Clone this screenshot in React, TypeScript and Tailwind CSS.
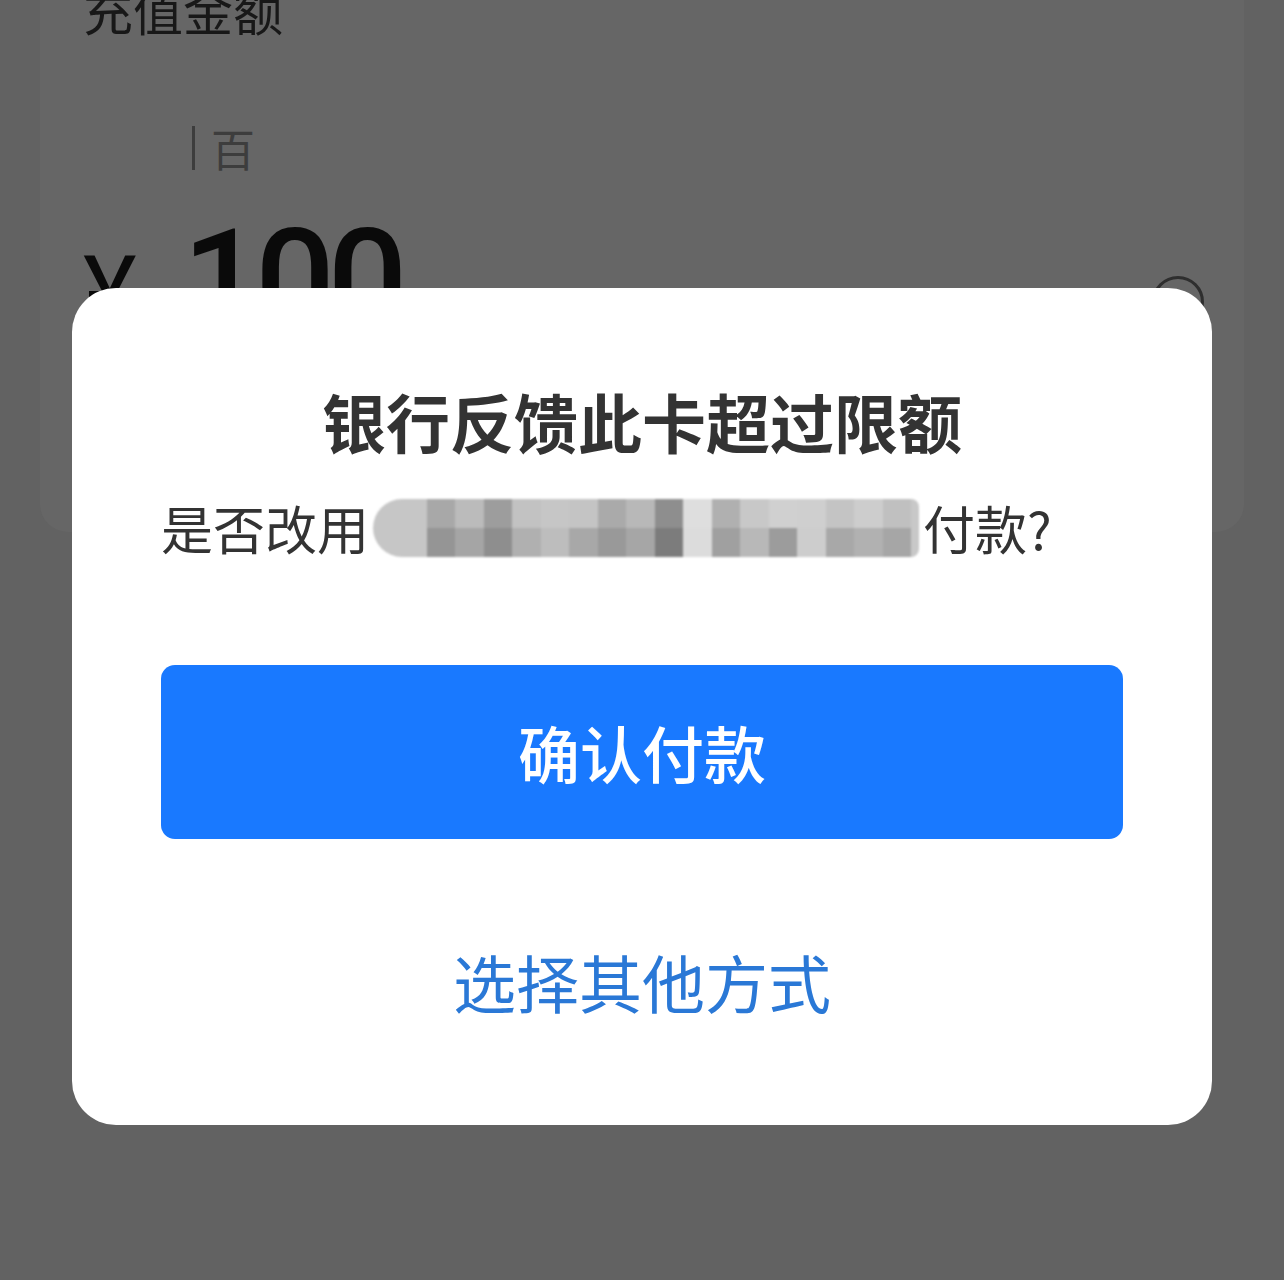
import React from "react"

const topRow = [
  "bg-[#a8a8a8]", "bg-[#bbbbbb]", "bg-[#9d9d9d]", "bg-[#c2c2c2]", "bg-[#c6c6c6]", "bg-[#c4c4c4]",
  "bg-[#aaaaaa]", "bg-[#b8b8b8]", "bg-[#8e8e8e]", "bg-[#dedede]", "bg-[#b0b0b0]", "bg-[#c8c8c8]",
  "bg-[#d0d0d0]", "bg-[#cfcfcf]", "bg-[#c4c4c4]", "bg-[#cdcdcd]", "bg-[#c0c0c0]",
]

const bottomRow = [
  "bg-[#959595]", "bg-[#a5a5a5]", "bg-[#8e8e8e]", "bg-[#b0b0b0]", "bg-[#bdbdbd]", "bg-[#a8a8a8]",
  "bg-[#999999]", "bg-[#a6a6a6]", "bg-[#7c7c7c]", "bg-[#dcdcdc]", "bg-[#a0a0a0]", "bg-[#b8b8b8]",
  "bg-[#9c9c9c]", "bg-[#cdcdcd]", "bg-[#a8a8a8]", "bg-[#b1b1b1]", "bg-[#a6a6a6]",
]

// pixelated card name, as in the screenshot
function Mosaic() {
  return (
    <span className="mx-[4px] inline-flex h-[58px] w-[546px] items-stretch blur-[1px]">
      <span className="w-[54px] rounded-l-full bg-[#c6c6c6]" />
      <span className="flex flex-1 flex-col">
        <span className="flex flex-1">
          {topRow.map((c, i) => (
            <span key={i} className={`flex-1 ${c}`} />
          ))}
        </span>
        <span className="flex flex-1">
          {bottomRow.map((c, i) => (
            <span key={i} className={`flex-1 ${c}`} />
          ))}
        </span>
      </span>
      <span className="w-[8px] rounded-r-full bg-[#c8c8c8]" />
    </span>
  )
}

export default function App() {
  return (
    <div
      className="relative h-[1280px] w-full overflow-hidden bg-[#626262]"
      style={{ fontFamily: '"Noto Sans CJK SC", "Noto Sans", sans-serif' }}
    >
      {/* page behind the overlay */}
      <div className="mx-[40px] h-[548px] rounded-b-[28px] bg-[#666666] pl-[43px] pr-[40px]">
        <div className="-mt-[16px] text-[50px] leading-none text-[#181818]">充值金额</div>
        <div className="mt-[92px] ml-[109px] flex items-center gap-[16px]">
          <span className="h-[44px] w-[3px] bg-[#3d3d3d]" />
          <span className="text-[44px] leading-none text-[#3d3d3d]">百</span>
        </div>
        <div className="mt-[40px] flex items-start">
          <div className="flex items-baseline gap-[46px] font-['Roboto'] text-[#0a0a0a]">
            <span className="text-[102px] leading-none">¥</span>
            <span className="text-[140px] leading-none font-medium tracking-[-7px]">100</span>
          </div>
          <span className="mt-[66px] ml-auto mr-0 size-[52px] rounded-full border-[3px] border-[#2e2e2e]" />
        </div>
      </div>

      {/* dialog */}
      <div className="absolute top-[288px] left-[72px] flex w-[1140px] flex-col rounded-[44px] bg-white px-[89px] pt-[100px] pb-[113px]">
        <h2 className="text-center text-[64px] leading-none font-bold text-[#333333]">银行反馈此卡超过限额</h2>
        <p className="mt-[47px] flex items-center text-[52px] leading-none text-[#333333]">
          是否改用
          <Mosaic />
          付款?
        </p>
        <button className="mt-[108px] h-[174px] w-full rounded-[14px] bg-[#1979ff] text-[62px] font-medium text-white">
          确认付款
        </button>
        <button className="mt-[110px] text-center text-[63px] leading-none text-[#2a78d6]">选择其他方式</button>
      </div>
    </div>
  )
}
